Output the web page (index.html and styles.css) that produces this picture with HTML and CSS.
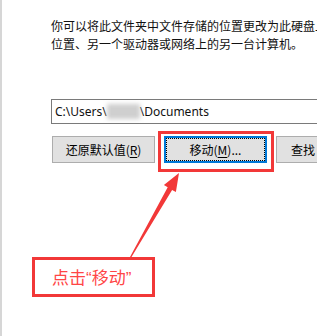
FILE: index.html
```html
<!DOCTYPE html>
<html lang="zh-CN">
<head>
<meta charset="utf-8">
<link rel="stylesheet" href="styles.css">
</head>
<body>
<div class="frame">
  <div class="dialog">
    <p class="desc">你可以将此文件夹中文件存储的位置更改为此硬盘上<br>位置、另一个驱动器或网络上的另一台计算机。</p>
    <div class="path">C:\Users\<span class="blur"></span>\Documents</div>
    <div class="buttons">
      <div class="btn">还原默认值(<u>R</u>)</div>
      <div class="btn focus">移动(<u>M</u>)...</div>
      <div class="btn clipped">查找</div>
    </div>
  </div>
  <div class="callout">点击<span class="q">“</span>移动<span class="q">”</span></div>
  <svg class="arrow" width="317" height="336" viewBox="0 0 317 336">
    <polygon points="130,257 131.2,257.4 172.1,189.9 175.9,192.1 179,173 163.9,185.1 167.7,187.3" fill="#f23838"/>
  </svg>
</div>
</body>
</html>
```

FILE: styles.css
```css
html, body {
  margin: 0;
  padding: 0;
  background: #fff;
}
body {
  width: 317px;
  height: 336px;
  overflow: hidden;
}
.frame {
  position: relative;
  width: 315px;
  height: 336px;
  border-left: 2px solid #d6d6d6;
  overflow: hidden;
  font-family: "Noto Sans CJK SC", "Noto Sans", sans-serif;
  color: #111;
}
.dialog {
  padding: 17px 0 0 49px;
}
.desc {
  margin: 0;
  font-size: 12px;
  line-height: 18px;
  white-space: nowrap;
}
.path {
  margin-top: 46px;
  width: 300px;
  height: 23px;
  border: 1px solid #7a7a7a;
  box-sizing: content-box;
  font-family: "Noto Sans", "Noto Sans CJK SC", sans-serif;
  font-size: 12px;
  line-height: 23px;
  padding-left: 3px;
  white-space: nowrap;
  display: flex;
  align-items: center;
}
.blur {
  display: inline-block;
  width: 33px;
  height: 15px;
  background: #cfcfcf;
  filter: blur(2px);
}
.buttons {
  margin-top: 12px;
  display: flex;
  gap: 9px;
  margin-left: 1px;
}
.btn {
  position: relative;
  flex: none;
  width: 103px;
  height: 27px;
  box-sizing: border-box;
  background: #e1e1e1;
  border: 1px solid #adadad;
  font-size: 12px;
  line-height: 25px;
  text-align: center;
  white-space: nowrap;
  color: #000;
}
.btn.clipped {
  text-align: left;
  padding-left: 14px;
}
.btn u {
  text-decoration: underline;
  text-underline-offset: 2px;
}
.btn.focus {
  border: 2px solid #0078d7;
  line-height: 23px;
  outline: 1px dotted #000;
  outline-offset: -3px;
}
.btn.focus::after {
  content: "";
  position: absolute;
  left: -8px;
  top: -7px;
  right: -9px;
  bottom: -11px;
  border: 3px solid #f23838;
}
.callout {
  margin: 94px 0 0 30px;
  height: 34px;
  border: 3px solid #f23838;
  color: #ff4646;
  font-size: 17px;
  line-height: 34px;
  padding-left: 17px;
  box-sizing: content-box;
  width: 100px;
  white-space: nowrap;
}
.callout .q {
  font-family: "Liberation Sans", sans-serif;
}
.arrow {
  position: absolute;
  left: -2px;
  top: 0;
}
```
